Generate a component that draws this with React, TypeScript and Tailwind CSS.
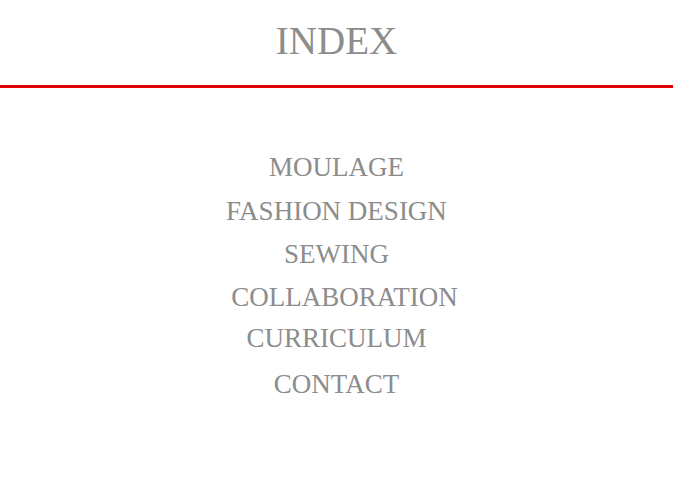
export default function App() {
  const font = { fontFamily: '"Liberation Serif", "Times New Roman", serif' };
  return (
    <div className="w-full min-h-[477px] bg-white text-[#8c8c8c]" style={font}>
      <header className="h-[88px] border-b-[3px] border-[#e30000] flex justify-center">
        <h1 className="pt-[21px] text-[39px] leading-none font-normal">INDEX</h1>
      </header>
      <nav className="flex flex-col items-center pt-[66px] text-[27px] leading-none">
        <a className="block">MOULAGE</a>
        <a className="block mt-[17px]">FASHION DESIGN</a>
        <a className="block mt-[16px]">SEWING</a>
        <a className="block mt-[16px] pl-[16px]">COLLABORATION</a>
        <a className="block mt-[14px]">CURRICULUM</a>
        <a className="block mt-[19px]">CONTACT</a>
      </nav>
    </div>
  );
}
